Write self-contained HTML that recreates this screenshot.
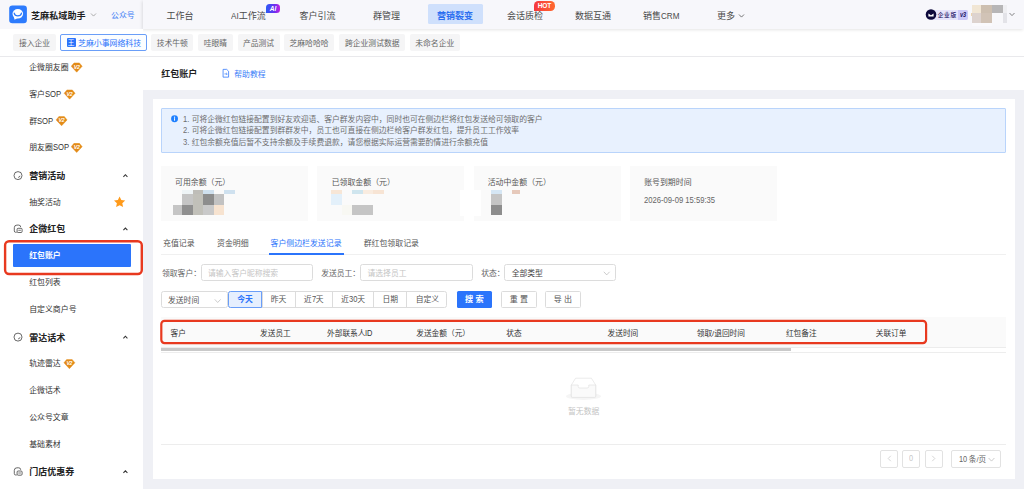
<!DOCTYPE html>
<html lang="zh-CN">
<head>
<meta charset="utf-8">
<title>红包账户</title>
<style>
*{box-sizing:border-box;margin:0;padding:0}
html,body{width:1024px;height:489px;overflow:hidden;background:#fff}
body{font-family:"Liberation Sans","Noto Sans CJK SC",sans-serif;color:#333;position:relative;font-size:7.8px}
.abs{position:absolute;white-space:nowrap}
.l{display:inline-block;line-height:1;transform-origin:0 50%;white-space:pre}
</style>
</head>
<body>
<div class="abs" style="left:0px;top:0px;width:1024px;height:29.2px;background:#f7f7fb;"></div>
<div class="abs" style="left:143.3px;top:0;width:881px;height:29px;background:#f7f7fb;box-shadow:-1px 1px 3px rgba(0,0,0,.11)"></div>
<svg class="abs" style="left:9px;top:5px" width="19" height="20" viewBox="-0.200 -0.400 19.000 20.000"><rect width="17.7" height="17.9" rx="3.2" fill="#2d7bfd"/><ellipse cx="8.6" cy="8.4" rx="5.3" ry="4.8" fill="#fff"/><path d="M4.4 10.8 L5.4 14.4 L8.4 12.6Z" fill="#fff"/><path d="M5 7.7 A3.7 3.3 0 0 0 12.3 7.7" stroke="#2d7bfd" stroke-width="1.25" fill="none" stroke-linecap="round"/></svg>
<div class="abs" style="left:31px;top:9.80px;font-size:9.1px;line-height:12px;height:12px;color:#1f1f1f;font-weight:bold;">芝麻私域助手</div>
<svg class="abs" style="left:90px;top:12px" width="8" height="7" viewBox="0.000 -0.500 8.000 7.000"><path d="M1 1 L3.5 3.6 L6 1" stroke="#999" stroke-width="0.8" fill="none"/></svg>
<div class="abs" style="left:111px;top:10.00px;font-size:7.9px;line-height:12px;height:12px;color:#3b7cf5;">公众号</div>
<div class="abs" style="left:428px;top:4.1px;width:54.8px;height:20.2px;background:#cfe0fc;border-radius:1.5px"></div>
<div class="abs" style="left:166.5px;top:9.60px;font-size:9px;line-height:12px;height:12px;color:#4a4a4a;">工作台</div>
<div class="abs" style="left:231px;top:9.60px;font-size:9px;line-height:12px;height:12px;color:#4a4a4a;"><span class="l" style="font-size:8.55px;transform:scaleX(0.95);margin-right:-0.40px">AI</span>工作流</div>
<div class="abs" style="left:299.5px;top:9.60px;font-size:9px;line-height:12px;height:12px;color:#4a4a4a;">客户引流</div>
<div class="abs" style="left:373px;top:9.60px;font-size:9px;line-height:12px;height:12px;color:#4a4a4a;">群管理</div>
<div class="abs" style="left:507px;top:9.60px;font-size:9px;line-height:12px;height:12px;color:#4a4a4a;">会话质检</div>
<div class="abs" style="left:575px;top:9.60px;font-size:9px;line-height:12px;height:12px;color:#4a4a4a;">数据互通</div>
<div class="abs" style="left:643px;top:9.60px;font-size:9px;line-height:12px;height:12px;color:#4a4a4a;">销售<span class="l" style="font-size:8.55px;transform:scaleX(0.95);margin-right:-0.97px">CRM</span></div>
<div class="abs" style="left:717px;top:9.60px;font-size:9px;line-height:12px;height:12px;color:#4a4a4a;">更多</div>
<div class="abs" style="left:437px;top:9.60px;font-size:9px;line-height:12px;height:12px;color:#2b6ef0;font-weight:bold;">营销裂变</div>
<svg class="abs" style="left:738px;top:13px" width="8" height="7" viewBox="0.000 -0.500 8.000 7.000"><path d="M1 1 L3.5 3.6 L6 1" stroke="#555" stroke-width="0.8" fill="none"/></svg>
<div class="abs" style="left:266.1px;top:4.1px;width:13.7px;height:9.2px;border-radius:3.5px 3.5px 3.5px 0;background:linear-gradient(90deg,#2a5cf5 0%,#6a30f0 60%,#c020e0 100%);color:#fff;font-size:6.6px;font-weight:bold;font-style:italic;line-height:9.2px;text-align:center">AI</div>
<div class="abs" style="left:533.8px;top:1.4px;width:21.1px;height:9.4px;border-radius:4.5px 4.5px 4.5px 0;background:linear-gradient(90deg,#f5363f,#ff6a2e);color:#fff;font-size:6.6px;font-weight:bold;line-height:9.6px;text-align:center;letter-spacing:-0.2px">HOT</div>
<div class="abs" style="left:930px;top:9.5px;width:37.5px;height:10px;border-radius:2px;background:#e6e4fb"></div>
<div class="abs" style="left:957.5px;top:9.5px;width:10px;height:10px;border-radius:0 2px 2px 0;background:#cbc8f7"></div>
<svg class="abs" style="left:925px;top:9px" width="13" height="12" viewBox="-0.500 0.000 13.000 12.000"><circle cx="5.5" cy="5.5" r="5.3" fill="#0e0a3c"/><path d="M2.9 4.6 L5.5 6.2 L8.1 4.6 V7.6 H2.9Z" fill="#fff"/></svg>
<div class="abs" style="left:937.7px;top:8.90px;font-size:5.7px;line-height:12px;height:12px;color:#1b1464;letter-spacing:0.7px;font-weight:500">企业版</div>
<div class="abs" style="left:959.7px;top:8.90px;font-size:5.8px;line-height:12px;height:12px;color:#1b1464;font-weight:bold;font-style:italic"><span class="l" style="font-size:7.25px;transform:scaleX(0.775);margin-right:-1.81px">v3</span></div>
<div class="abs" style="left:972px;top:4.8px;width:9.4px;height:7.9px;background:#f1e6d4;"></div>
<div class="abs" style="left:981.4px;top:4.8px;width:10.6px;height:7.9px;background:#cdbfb0;"></div>
<div class="abs" style="left:992px;top:4.8px;width:10.9px;height:7.9px;background:#b7b6b7;"></div>
<div class="abs" style="left:1002.9px;top:4.8px;width:3.9px;height:7.9px;background:#efeff2;"></div>
<div class="abs" style="left:972px;top:12.7px;width:9.4px;height:10.3px;background:#ddd3cf;"></div>
<div class="abs" style="left:981.4px;top:12.7px;width:10.6px;height:10.3px;background:#d1c3b6;"></div>
<div class="abs" style="left:992px;top:12.7px;width:10.9px;height:12.3px;background:#f8f8fb;"></div>
<div class="abs" style="left:1002.9px;top:12.7px;width:3.9px;height:10.3px;background:#e3e3e8;"></div>
<div class="abs" style="left:971.2px;top:12.7px;width:1.2px;height:3.6px;background:#ecd3b0;"></div>
<div class="abs" style="left:972px;top:23px;width:20px;height:3px;background:#fafafd;"></div>
<svg class="abs" style="left:1008px;top:12px" width="9" height="6" viewBox="-0.500 0.000 9.000 6.000"><path d="M1 1 L3.5 3.6 L6 1" stroke="#666" stroke-width="0.8" fill="none"/></svg>
<div class="abs" style="left:0px;top:29.2px;width:143px;height:27px;background:#fff;"></div>
<div class="abs" style="left:0px;top:56px;width:1024px;height:0.8px;background:#e9e9ec;"></div>
<div class="abs" style="left:13.1px;top:34.25px;width:42.9px;height:17px;line-height:19px;background:#f5f5f6;border-radius:2px;font-size:7.8px;color:#666;text-align:center">接入企业</div>
<div class="abs" style="left:151.25px;top:34.25px;width:42.0px;height:17px;line-height:19px;background:#f5f5f6;border-radius:2px;font-size:7.8px;color:#666;text-align:center">技术牛顿</div>
<div class="abs" style="left:198.25px;top:34.25px;width:34.25px;height:17px;line-height:19px;background:#f5f5f6;border-radius:2px;font-size:7.8px;color:#666;text-align:center">哇眼睛</div>
<div class="abs" style="left:237.5px;top:34.25px;width:42.0px;height:17px;line-height:19px;background:#f5f5f6;border-radius:2px;font-size:7.8px;color:#666;text-align:center">产品测试</div>
<div class="abs" style="left:284.25px;top:34.25px;width:49.5px;height:17px;line-height:19px;background:#f5f5f6;border-radius:2px;font-size:7.8px;color:#666;text-align:center">芝麻哈哈哈</div>
<div class="abs" style="left:339.25px;top:34.25px;width:66.0px;height:17px;line-height:19px;background:#f5f5f6;border-radius:2px;font-size:7.8px;color:#666;text-align:center">跨企业测试数据</div>
<div class="abs" style="left:409.75px;top:34.25px;width:50.0px;height:17px;line-height:19px;background:#f5f5f6;border-radius:2px;font-size:7.8px;color:#666;text-align:center">未命名企业</div>
<div class="abs" style="left:60px;top:34.25px;width:87px;height:17px;background:#fbfdff;border:0.8px solid #6a9ef8;border-radius:2px"></div>
<div class="abs" style="left:66.5px;top:38.3px;width:9px;height:9px;background:#2b74fb;border-radius:1px;color:#fff;font-size:6.5px;line-height:9px;text-align:center">王</div>
<div class="abs" style="left:78px;top:37.50px;font-size:7.9px;line-height:12px;height:12px;color:#2b74fb;">芝麻小事网络科技</div>
<div class="abs" style="left:29.2px;top:61.90px;font-size:7.9px;line-height:12px;height:12px;color:#333;">企微朋友圈</div>
<svg class="abs" style="left:71px;top:62px" width="13" height="12" viewBox="0.000 -0.700 13.000 12.000"><path d="M3 0.2 H8.4 L11.2 3.6 L5.7 9.5 L0.2 3.6Z" fill="#e38b17" stroke="#e38b17" stroke-width="0.4" stroke-linejoin="round"/><text x="5.6" y="6.1" font-size="5.2" font-weight="bold" fill="#fff" text-anchor="middle" font-family="Liberation Sans, sans-serif" font-style="italic" letter-spacing="-0.3">V2</text></svg>
<div class="abs" style="left:29.2px;top:88.90px;font-size:7.9px;line-height:12px;height:12px;color:#333;">客户<span class="l" style="font-size:9.88px;transform:scaleX(0.775);margin-right:-4.69px">SOP</span></div>
<svg class="abs" style="left:63px;top:89px" width="14" height="12" viewBox="-0.900 -0.700 14.000 12.000"><path d="M3 0.2 H8.4 L11.2 3.6 L5.7 9.5 L0.2 3.6Z" fill="#e38b17" stroke="#e38b17" stroke-width="0.4" stroke-linejoin="round"/><text x="5.6" y="6.1" font-size="5.2" font-weight="bold" fill="#fff" text-anchor="middle" font-family="Liberation Sans, sans-serif" font-style="italic" letter-spacing="-0.3">V2</text></svg>
<div class="abs" style="left:29.2px;top:115.50px;font-size:7.9px;line-height:12px;height:12px;color:#333;">群<span class="l" style="font-size:9.88px;transform:scaleX(0.775);margin-right:-4.69px">SOP</span></div>
<svg class="abs" style="left:55px;top:116px" width="14" height="11" viewBox="-0.900 -0.300 14.000 11.000"><path d="M3 0.2 H8.4 L11.2 3.6 L5.7 9.5 L0.2 3.6Z" fill="#e38b17" stroke="#e38b17" stroke-width="0.4" stroke-linejoin="round"/><text x="5.6" y="6.1" font-size="5.2" font-weight="bold" fill="#fff" text-anchor="middle" font-family="Liberation Sans, sans-serif" font-style="italic" letter-spacing="-0.3">V2</text></svg>
<div class="abs" style="left:29.2px;top:142.30px;font-size:7.9px;line-height:12px;height:12px;color:#333;">朋友圈<span class="l" style="font-size:9.88px;transform:scaleX(0.775);margin-right:-4.69px">SOP</span></div>
<svg class="abs" style="left:71px;top:143px" width="13" height="11" viewBox="0.000 -0.100 13.000 11.000"><path d="M3 0.2 H8.4 L11.2 3.6 L5.7 9.5 L0.2 3.6Z" fill="#e38b17" stroke="#e38b17" stroke-width="0.4" stroke-linejoin="round"/><text x="5.6" y="6.1" font-size="5.2" font-weight="bold" fill="#fff" text-anchor="middle" font-family="Liberation Sans, sans-serif" font-style="italic" letter-spacing="-0.3">V2</text></svg>
<svg class="abs" style="left:13px;top:170px" width="11" height="12" viewBox="0.000 -0.600 11.000 12.000"><circle cx="5" cy="5" r="4" stroke="#444" stroke-width="0.8" fill="none"/><path d="M5.2 6.8 A2 2 0 0 0 7 5.2" stroke="#444" stroke-width="0.8" fill="none"/></svg>
<div class="abs" style="left:29.2px;top:170.00px;font-size:9px;line-height:12px;height:12px;color:#222;font-weight:bold;">营销活动</div>
<svg class="abs" style="left:122px;top:173px" width="8" height="7" viewBox="-0.400 -0.100 8.000 7.000"><path d="M1 3.7 L3 1.6 L5 3.7" stroke="#333" stroke-width="1.05" fill="none"/></svg>
<div class="abs" style="left:29.2px;top:196.80px;font-size:7.9px;line-height:12px;height:12px;color:#333;">抽奖活动</div>
<svg class="abs" style="left:113px;top:195px" width="14" height="14" viewBox="-0.600 -0.800 14.000 14.000"><path d="M6 0.6 L7.7 4.2 L11.6 4.7 L8.7 7.4 L9.5 11.3 L6 9.4 L2.5 11.3 L3.3 7.4 L0.4 4.7 L4.3 4.2Z" fill="#ff9a1a"/></svg>
<svg class="abs" style="left:13px;top:224px" width="12" height="12" viewBox="-0.500 -0.300 12.000 12.000"><path d="M3.2 8 H2.2 A1.4 1.4 0 0 1 0.8 6.6 V3.4 A2.6 2.6 0 0 1 3.4 0.8 H5.2 A2 2 0 0 1 7.2 2.8" stroke="#444" stroke-width="0.8" fill="none"/><rect x="3.6" y="4" width="5" height="4.2" rx="1" stroke="#444" stroke-width="0.8" fill="none"/><path d="M4.8 6 H7.4" stroke="#444" stroke-width="0.7"/></svg>
<div class="abs" style="left:29.2px;top:223.40px;font-size:9px;line-height:12px;height:12px;color:#222;font-weight:bold;">企微红包</div>
<svg class="abs" style="left:122px;top:226px" width="8" height="7" viewBox="-0.400 -0.500 8.000 7.000"><path d="M1 3.7 L3 1.6 L5 3.7" stroke="#333" stroke-width="1.05" fill="none"/></svg>
<div class="abs" style="left:13.1px;top:244.4px;width:117.5px;height:22.4px;background:#2b74fb;border-radius:1px"></div>
<div class="abs" style="left:29.2px;top:250.30px;font-size:7.9px;line-height:12px;height:12px;color:#fff;font-weight:bold;">红包账户</div>
<svg class="abs" style="left:2px;top:238px" width="145" height="41" viewBox="0.000 0.000 145.000 41.000"><rect x="3.1" y="3.2" width="136.7" height="32.8" rx="4" fill="none" stroke="#e8391f" stroke-width="2.4"/></svg>
<div class="abs" style="left:29.2px;top:277.40px;font-size:7.9px;line-height:12px;height:12px;color:#333;">红包列表</div>
<div class="abs" style="left:29.2px;top:304.40px;font-size:7.9px;line-height:12px;height:12px;color:#333;">自定义商户号</div>
<svg class="abs" style="left:13px;top:332px" width="11" height="12" viewBox="0.000 -0.100 11.000 12.000"><circle cx="5" cy="5" r="4" stroke="#444" stroke-width="0.8" fill="none"/><path d="M5.2 6.8 A2 2 0 0 0 7 5.2" stroke="#444" stroke-width="0.8" fill="none"/></svg>
<div class="abs" style="left:29.2px;top:331.50px;font-size:9px;line-height:12px;height:12px;color:#222;font-weight:bold;">雷达话术</div>
<svg class="abs" style="left:122px;top:334px" width="8" height="7" viewBox="-0.400 -0.600 8.000 7.000"><path d="M1 3.7 L3 1.6 L5 3.7" stroke="#333" stroke-width="1.05" fill="none"/></svg>
<div class="abs" style="left:29.2px;top:358.40px;font-size:7.9px;line-height:12px;height:12px;color:#333;">轨迹雷达</div>
<svg class="abs" style="left:63px;top:359px" width="14" height="11" viewBox="-0.700 -0.200 14.000 11.000"><path d="M3 0.2 H8.4 L11.2 3.6 L5.7 9.5 L0.2 3.6Z" fill="#e38b17" stroke="#e38b17" stroke-width="0.4" stroke-linejoin="round"/><text x="5.6" y="6.1" font-size="5.2" font-weight="bold" fill="#fff" text-anchor="middle" font-family="Liberation Sans, sans-serif" font-style="italic" letter-spacing="-0.3">V2</text></svg>
<div class="abs" style="left:29.2px;top:385.30px;font-size:7.9px;line-height:12px;height:12px;color:#333;">企微话术</div>
<div class="abs" style="left:29.2px;top:412.30px;font-size:7.9px;line-height:12px;height:12px;color:#333;">公众号文章</div>
<div class="abs" style="left:29.2px;top:439.20px;font-size:7.9px;line-height:12px;height:12px;color:#333;">基础素材</div>
<svg class="abs" style="left:13px;top:467px" width="12" height="11" viewBox="-0.500 0.000 12.000 11.000"><path d="M3.2 8 H2.2 A1.4 1.4 0 0 1 0.8 6.6 V3.4 A2.6 2.6 0 0 1 3.4 0.8 H5.2 A2 2 0 0 1 7.2 2.8" stroke="#444" stroke-width="0.8" fill="none"/><rect x="3.6" y="4" width="5" height="4.2" rx="1" stroke="#444" stroke-width="0.8" fill="none"/><path d="M4.8 6 H7.4" stroke="#444" stroke-width="0.7"/></svg>
<div class="abs" style="left:29.2px;top:466.10px;font-size:9px;line-height:12px;height:12px;color:#222;font-weight:bold;">门店优惠券</div>
<svg class="abs" style="left:122px;top:469px" width="8" height="7" viewBox="-0.400 -0.200 8.000 7.000"><path d="M1 3.7 L3 1.6 L5 3.7" stroke="#333" stroke-width="1.05" fill="none"/></svg>
<div class="abs" style="left:161.3px;top:68.40px;font-size:9px;line-height:12px;height:12px;color:#1f1f1f;font-weight:bold;">红包账户</div>
<svg class="abs" style="left:221px;top:68px" width="10" height="12" viewBox="-0.935 -0.632 10.390 12.632"><path d="M1.2 0.8 H5 L7 2.8 V9 H1.2Z" stroke="#2b74fb" stroke-width="0.8" fill="none" stroke-linejoin="round"/><path d="M2.6 5.6 H5.4 M4.6 4.6 L5.6 5.6 L4.6 6.6" stroke="#2b74fb" stroke-width="0.7" fill="none"/></svg>
<div class="abs" style="left:234.3px;top:69.30px;font-size:7.8px;line-height:12px;height:12px;color:#3a7df8;">帮助教程</div>
<div class="abs" style="left:143.2px;top:89.6px;width:881px;height:400px;background:#eff0f5;"></div>
<div class="abs" style="left:152.5px;top:99px;width:862.5px;height:380.3px;background:#fff;"></div>
<div class="abs" style="left:161px;top:107.5px;width:845px;height:45px;background:#e8f1fe;border:0.8px solid #b9d4fb;border-radius:1px"></div>
<svg class="abs" style="left:171px;top:115px" width="8" height="9" viewBox="-0.145 -0.435 11.594 13.043"><circle cx="5" cy="5" r="5" fill="#1e80ff"/><rect x="4.3" y="4.2" width="1.4" height="3.6" fill="#fff"/><circle cx="5" cy="2.7" r="0.9" fill="#fff"/></svg>
<div class="abs" style="left:183.2px;top:113.80px;font-size:7.8px;line-height:12px;height:12px;color:#6e6e6e;"><span class="l" style="font-size:9.75px;transform:scaleX(0.775);margin-right:-1.83px">1.</span> 可将企微红包链接配置到好友欢迎语、客户群发内容中，同时也可在侧边栏将红包发送给可领取的客户</div>
<div class="abs" style="left:183.2px;top:125.45px;font-size:7.8px;line-height:12px;height:12px;color:#6e6e6e;"><span class="l" style="font-size:9.75px;transform:scaleX(0.775);margin-right:-1.83px">2.</span> 可将企微红包链接配置到群群发中，员工也可直接在侧边栏给客户群发红包，提升员工工作效率</div>
<div class="abs" style="left:183.2px;top:137.10px;font-size:7.8px;line-height:12px;height:12px;color:#6e6e6e;"><span class="l" style="font-size:9.75px;transform:scaleX(0.775);margin-right:-1.83px">3.</span> 红包余额充值后暂不支持余额及手续费退款，请您根据实际运营需要酌情进行余额充值</div>
<div class="abs" style="left:161px;top:166.2px;width:147.3px;height:55px;background:#fafafa;"></div>
<div class="abs" style="left:317.2px;top:166.2px;width:147.3px;height:55px;background:#fafafa;"></div>
<div class="abs" style="left:473.8px;top:166.2px;width:147.3px;height:55px;background:#fafafa;"></div>
<div class="abs" style="left:629.9px;top:166.2px;width:147.3px;height:55px;background:#fafafa;"></div>
<div class="abs" style="left:175px;top:176.60px;font-size:7.9px;line-height:12px;height:12px;color:#555;">可用余额（元）</div>
<div class="abs" style="left:331.7px;top:176.60px;font-size:7.9px;line-height:12px;height:12px;color:#555;">已领取金额（元）</div>
<div class="abs" style="left:487.7px;top:176.60px;font-size:7.9px;line-height:12px;height:12px;color:#555;">活动中金额（元）</div>
<div class="abs" style="left:644.2px;top:176.60px;font-size:7.9px;line-height:12px;height:12px;color:#555;">账号到期时间</div>
<div class="abs" style="left:644.2px;top:195.30px;font-size:7.9px;line-height:12px;height:12px;color:#666;"><span class="l" style="font-size:9.88px;transform:scaleX(0.775);margin-right:-20.63px">2026-09-09 15:59:35</span></div>
<div class="abs" style="left:182px;top:190px;width:10.5px;height:4.3px;background:#eef4f6;"></div>
<div class="abs" style="left:192.5px;top:190px;width:10.5px;height:4.3px;background:#bebdb8;"></div>
<div class="abs" style="left:203px;top:190px;width:10.5px;height:4.3px;background:#cfe0ee;"></div>
<div class="abs" style="left:224px;top:190px;width:10.5px;height:4.3px;background:#cfe1ef;"></div>
<div class="abs" style="left:182px;top:194.3px;width:10.5px;height:10.6px;background:#c5c5c5;"></div>
<div class="abs" style="left:192.5px;top:194.3px;width:10.5px;height:10.6px;background:#c1c0b9;"></div>
<div class="abs" style="left:203px;top:194.3px;width:10.5px;height:10.6px;background:#8d8d8d;"></div>
<div class="abs" style="left:213.5px;top:194.3px;width:10.5px;height:10.6px;background:#c2c2c2;"></div>
<div class="abs" style="left:172.5px;top:204.9px;width:9.5px;height:10.6px;background:#c5c5c5;"></div>
<div class="abs" style="left:182px;top:204.9px;width:10.5px;height:10.6px;background:#8f8f8f;"></div>
<div class="abs" style="left:192.5px;top:204.9px;width:10.5px;height:10.6px;background:#c1c0b9;"></div>
<div class="abs" style="left:203px;top:204.9px;width:10.5px;height:10.6px;background:#c9c9c9;"></div>
<div class="abs" style="left:213.5px;top:204.9px;width:10.5px;height:10.6px;background:#f7e3d0;"></div>
<div class="abs" style="left:331px;top:190px;width:10.5px;height:4.3px;background:#f7e6d6;"></div>
<div class="abs" style="left:352px;top:190px;width:10.5px;height:4.3px;background:#cfe5ee;"></div>
<div class="abs" style="left:362.5px;top:190px;width:10.5px;height:4.3px;background:#f9ece0;"></div>
<div class="abs" style="left:373px;top:190px;width:10.5px;height:4.3px;background:#f7e4d4;"></div>
<div class="abs" style="left:331px;top:194.3px;width:10.5px;height:10.6px;background:#e3f0fa;"></div>
<div class="abs" style="left:341.5px;top:204.9px;width:10.5px;height:10.6px;background:#f8f8f3;"></div>
<div class="abs" style="left:352px;top:204.9px;width:21px;height:10.6px;background:#c5c5c5;"></div>
<div class="abs" style="left:459.7px;top:190px;width:21.3px;height:26px;background:#ffffff;"></div>
<div class="abs" style="left:491px;top:190px;width:10.5px;height:4.3px;background:#d5e6f4;"></div>
<div class="abs" style="left:511.7px;top:190px;width:8.5px;height:4.3px;background:#e6c9bb;"></div>
<div class="abs" style="left:491px;top:194.3px;width:10.5px;height:10.6px;background:#c5c5c5;"></div>
<div class="abs" style="left:491px;top:204.9px;width:10.5px;height:10.6px;background:#8d8d8d;"></div>
<div class="abs" style="left:161px;top:254.4px;width:845px;height:0.8px;background:#f0f0f0;"></div>
<div class="abs" style="left:163px;top:237.80px;font-size:7.9px;line-height:12px;height:12px;color:#555;">充值记录</div>
<div class="abs" style="left:217px;top:237.80px;font-size:7.9px;line-height:12px;height:12px;color:#555;">资金明细</div>
<div class="abs" style="left:270.5px;top:237.80px;font-size:7.9px;line-height:12px;height:12px;color:#2b74fb;">客户侧边栏发送记录</div>
<div class="abs" style="left:363.7px;top:237.80px;font-size:7.9px;line-height:12px;height:12px;color:#555;">群红包领取记录</div>
<div class="abs" style="left:268.7px;top:253.4px;width:75px;height:1.9px;background:#2b74fb;"></div>
<div class="abs" style="left:162px;top:268.10px;font-size:7.8px;line-height:12px;height:12px;color:#666;">领取客户：</div>
<div class="abs" style="left:200.5px;top:263.75px;width:112.30000000000001px;height:17.6px;background:#fff;border:0.8px solid #dcdcdc;border-radius:2.5px;"></div>
<div class="abs" style="left:208px;top:268.10px;font-size:7.8px;line-height:12px;height:12px;color:#c4c4c4;">请输入客户昵称搜索</div>
<div class="abs" style="left:321.2px;top:268.10px;font-size:7.8px;line-height:12px;height:12px;color:#666;">发送员工：</div>
<div class="abs" style="left:360px;top:263.75px;width:112.5px;height:17.6px;background:#fff;border:0.8px solid #dcdcdc;border-radius:2.5px;"></div>
<div class="abs" style="left:367.5px;top:268.10px;font-size:7.8px;line-height:12px;height:12px;color:#c4c4c4;">请选择员工</div>
<div class="abs" style="left:481.2px;top:268.10px;font-size:7.8px;line-height:12px;height:12px;color:#666;">状态：</div>
<div class="abs" style="left:504.2px;top:263.75px;width:112.30000000000001px;height:17.6px;background:#fff;border:0.8px solid #dcdcdc;border-radius:2.5px;"></div>
<div class="abs" style="left:511.7px;top:268.10px;font-size:7.8px;line-height:12px;height:12px;color:#444;">全部类型</div>
<svg class="abs" style="left:603px;top:271px" width="9" height="6" viewBox="-0.200 0.000 9.000 6.000"><path d="M0.6 0.8 L3.5 3.9 L6.4 0.8" stroke="#bbb" stroke-width="0.75" fill="none"/></svg>
<div class="abs" style="left:161.2px;top:291.25px;width:67.10000000000002px;height:17px;background:#fff;border:0.8px solid #dcdcdc;border-radius:2.5px;"></div>
<div class="abs" style="left:168px;top:295.00px;font-size:7.8px;line-height:12px;height:12px;color:#555;">发送时间</div>
<svg class="abs" style="left:214px;top:298px" width="9" height="7" viewBox="-0.200 -0.600 9.000 7.000"><path d="M0.6 0.8 L3.5 3.9 L6.4 0.8" stroke="#bbb" stroke-width="0.75" fill="none"/></svg>
<div class="abs" style="left:228.3px;top:291.25px;width:219.2px;height:17px;background:#fff;border:0.8px solid #dcdcdc;border-radius:2.5px"></div>
<div class="abs" style="left:261.5px;top:291.25px;width:33.0px;height:17px;border-left:0.8px solid #dcdcdc;font-size:7.8px;line-height:17px;color:#555;text-align:center">昨天</div>
<div class="abs" style="left:294.5px;top:291.25px;width:37.25px;height:17px;border-left:0.8px solid #dcdcdc;font-size:7.8px;line-height:17px;color:#555;text-align:center">近<span class="l" style="font-size:9.75px;transform:scaleX(0.775);margin-right:-1.22px">7</span>天</div>
<div class="abs" style="left:331.75px;top:291.25px;width:41.5px;height:17px;border-left:0.8px solid #dcdcdc;font-size:7.8px;line-height:17px;color:#555;text-align:center">近<span class="l" style="font-size:9.75px;transform:scaleX(0.775);margin-right:-2.44px">30</span>天</div>
<div class="abs" style="left:373.25px;top:291.25px;width:33.0px;height:17px;border-left:0.8px solid #dcdcdc;font-size:7.8px;line-height:17px;color:#555;text-align:center">日期</div>
<div class="abs" style="left:406.25px;top:291.25px;width:41.25px;height:17px;border-left:0.8px solid #dcdcdc;font-size:7.8px;line-height:17px;color:#555;text-align:center">自定义</div>
<div class="abs" style="left:228.3px;top:291.25px;width:33.6px;height:17px;background:#e6effe;border:0.8px solid #6a9ef8;border-radius:2.5px 0 0 2.5px;font-size:7.8px;line-height:15.6px;color:#2b74fb;font-weight:bold;text-align:center">今天</div>
<div class="abs" style="left:456.5px;top:291.25px;width:35.5px;height:17px;background:#2b74fb;border-radius:1.5px;font-size:8.2px;line-height:17px;color:#fff;font-weight:bold;text-align:center">搜 索</div>
<div class="abs" style="left:501px;top:291.25px;width:35.8px;height:17px;background:#fff;border:0.8px solid #dcdcdc;border-radius:1.5px;font-size:8px;line-height:15.6px;color:#555;text-align:center">重 置</div>
<div class="abs" style="left:545.2px;top:291.25px;width:35.6px;height:17px;background:#fff;border:0.8px solid #dcdcdc;border-radius:1.5px;font-size:8px;line-height:15.6px;color:#555;text-align:center">导 出</div>
<div class="abs" style="left:161px;top:317.3px;width:845px;height:30px;background:#fafafa;"></div>
<div class="abs" style="left:161px;top:347.3px;width:845px;height:0.7px;background:#ececec;"></div>
<div class="abs" style="left:161px;top:351.6px;width:845px;height:0.6px;background:#ededed;"></div>
<div class="abs" style="left:170.5px;top:327.80px;font-size:7.7px;line-height:12px;height:12px;color:#333;">客户</div>
<div class="abs" style="left:260px;top:327.80px;font-size:7.7px;line-height:12px;height:12px;color:#333;">发送员工</div>
<div class="abs" style="left:327px;top:327.80px;font-size:7.7px;line-height:12px;height:12px;color:#333;">外部联系人<span class="l" style="font-size:9.62px;transform:scaleX(0.775);margin-right:-2.17px">ID</span></div>
<div class="abs" style="left:416.2px;top:327.80px;font-size:7.7px;line-height:12px;height:12px;color:#333;">发送金额（元）</div>
<div class="abs" style="left:506.2px;top:327.80px;font-size:7.7px;line-height:12px;height:12px;color:#333;">状态</div>
<div class="abs" style="left:607.5px;top:327.80px;font-size:7.7px;line-height:12px;height:12px;color:#333;">发送时间</div>
<div class="abs" style="left:696.7px;top:327.80px;font-size:7.7px;line-height:12px;height:12px;color:#333;">领取/退回时间</div>
<div class="abs" style="left:785.9px;top:327.80px;font-size:7.7px;line-height:12px;height:12px;color:#333;">红包备注</div>
<div class="abs" style="left:875.7px;top:327.80px;font-size:7.7px;line-height:12px;height:12px;color:#333;">关联订单</div>
<svg class="abs" style="left:158px;top:318px" width="773" height="30" viewBox="0.000 0.000 773.000 30.000"><rect x="3.3" y="2.85" width="764.8" height="22.2" rx="3.2" fill="none" stroke="#e8391f" stroke-width="2.2"/></svg>
<div class="abs" style="left:161px;top:348px;width:630.3px;height:3.3px;background:#c9c9c9;"></div>
<svg class="abs" style="left:565px;top:376px" width="38" height="26" viewBox="0.000 0.000 38.000 26.000"><ellipse cx="18.5" cy="20.3" rx="17.5" ry="3.6" fill="#f5f5f5"/><path d="M6.3 9 L10.6 2.2 H26.4 L30.7 9 V20.2 A1.2 1.2 0 0 1 29.5 21.4 H7.5 A1.2 1.2 0 0 1 6.3 20.2Z" fill="#fff" stroke="#dedede" stroke-width="0.6"/><path d="M6.3 9 H13.2 V10.4 A1.6 1.6 0 0 0 14.8 12 H22.2 A1.6 1.6 0 0 0 23.8 10.4 V9 H30.7 V20.2 A1.2 1.2 0 0 1 29.5 21.4 H7.5 A1.2 1.2 0 0 1 6.3 20.2Z" fill="#fafafa" stroke="#dedede" stroke-width="0.6"/></svg>
<div class="abs" style="left:568px;top:405.60px;font-size:7.85px;line-height:12px;height:12px;color:#c4c4c4;">暂无数据</div>
<div class="abs" style="left:161px;top:443.6px;width:845px;height:0.7px;background:#ededed;"></div>
<div class="abs" style="left:880.4px;top:450.3px;width:17.5px;height:17.4px;background:#fff;border:0.8px solid #e2e2e2;border-radius:2px;font-size:7.6px;line-height:15.8px;text-align:center;color:#c8c8c8;"><svg width="5" height="7" viewBox="0 0 5 7" style="vertical-align:middle;margin-top:-1px"><path d="M3.8 0.8 L1.2 3.5 L3.8 6.2" stroke="#c4c4c4" stroke-width="0.7" fill="none"/></svg></div>
<div class="abs" style="left:902.4px;top:450.3px;width:17.399999999999977px;height:17.4px;background:#fff;border:0.8px solid #e2e2e2;border-radius:2px;font-size:7.6px;line-height:15.8px;text-align:center;color:#c8c8c8;"><span class="l" style="font-size:9.50px;transform:scaleX(0.775);margin-right:-1.19px">0</span></div>
<div class="abs" style="left:924.5px;top:450.3px;width:18.100000000000023px;height:17.4px;background:#fff;border:0.8px solid #e2e2e2;border-radius:2px;font-size:7.6px;line-height:15.8px;text-align:center;color:#c8c8c8;"><svg width="5" height="7" viewBox="0 0 5 7" style="vertical-align:middle;margin-top:-1px"><path d="M1.2 0.8 L3.8 3.5 L1.2 6.2" stroke="#c4c4c4" stroke-width="0.7" fill="none"/></svg></div>
<div class="abs" style="left:951.4px;top:450.3px;width:49.39999999999998px;height:17.4px;background:#fff;border:0.8px solid #e2e2e2;border-radius:2px;font-size:7.6px;line-height:15.8px;text-align:center;color:#c8c8c8;color:#555"></div>
<div class="abs" style="left:958.5px;top:453.50px;font-size:7.6px;line-height:12px;height:12px;color:#666;"><span class="l" style="font-size:9.50px;transform:scaleX(0.775);margin-right:-2.38px">10</span> 条/页</div>
<svg class="abs" style="left:988px;top:457px" width="8" height="7" viewBox="0.000 -0.200 8.000 7.000"><path d="M0.6 0.8 L3.5 3.9 L6.4 0.8" stroke="#bbb" stroke-width="0.75" fill="none"/></svg>
</body>
</html>
